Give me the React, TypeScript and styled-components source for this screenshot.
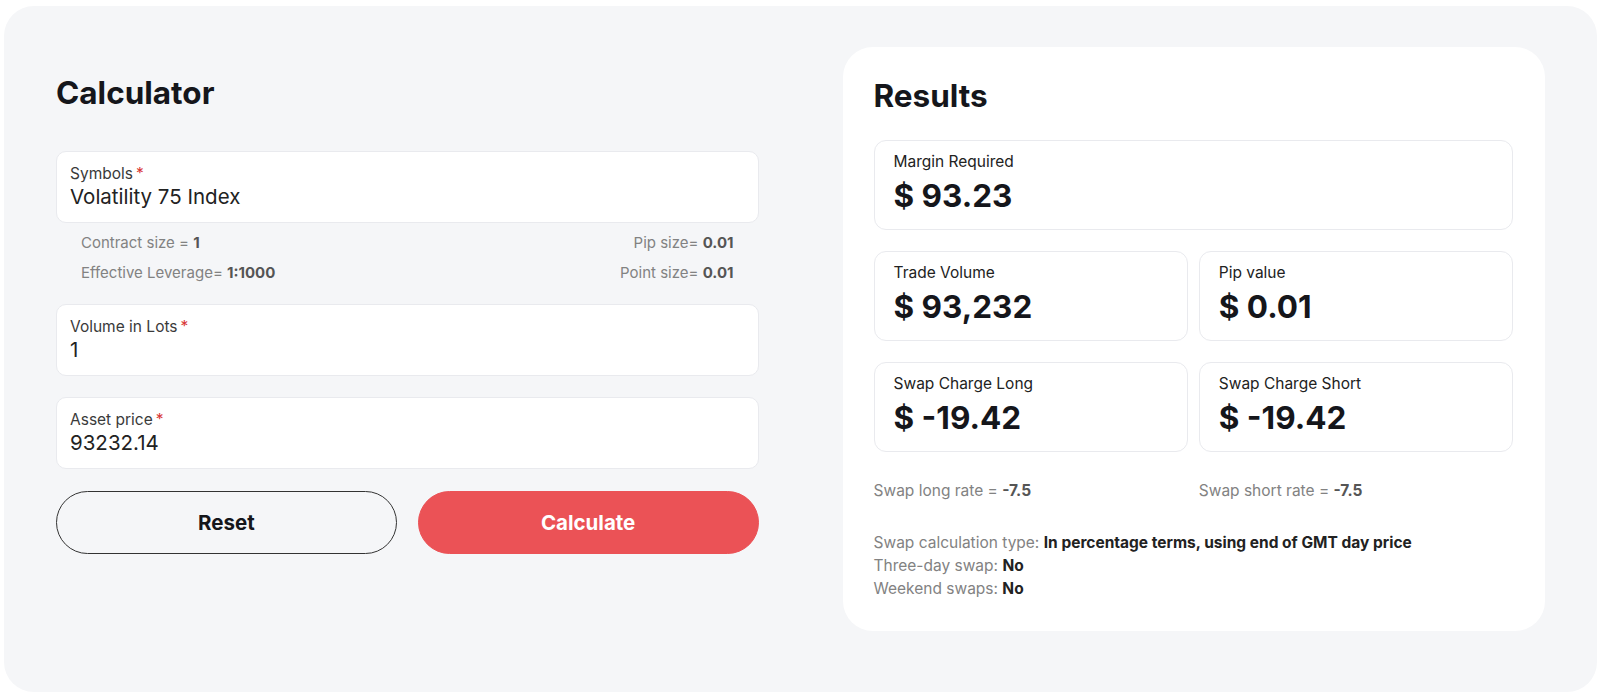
import React from "react";
import styled, { createGlobalStyle } from "styled-components";

const GlobalStyle = createGlobalStyle`
  html, body {
    margin: 0;
    padding: 0;
    background: #ffffff;
    font-family: Inter, "Noto Sans", "Liberation Sans", sans-serif;
  }
  * {
    box-sizing: border-box;
  }
`;

const Panel = styled.div`
  margin: 6px 3px 5px 4px;
  height: 686px;
  border-radius: 30px;
  background: #f5f6f8;
  padding: 41px 52px;
  display: grid;
  grid-template-columns: 1fr 1fr;
  column-gap: 84px;
  align-items: start;
`;

const Column = styled.div`
  display: flex;
  flex-direction: column;
  padding-top: 27px;
`;

const Heading = styled.h2`
  margin: 0;
  font-size: 31.5px;
  line-height: 38px;
  font-weight: 700;
  color: #15161b;
`;

const Field = styled.div<{ $gap?: number }>`
  margin-top: ${(p) => p.$gap ?? 21}px;
  background: #ffffff;
  border: 1px solid #e9eaee;
  border-radius: 10px;
  padding: 12px 13px 12px;
`;

const FieldLabel = styled.div`
  font-size: 15.5px;
  line-height: 20px;
  color: #3a3a3a;
`;

const Required = styled.span`
  color: #d93636;
  margin-left: 3px;
`;

const FieldValue = styled.div`
  font-size: 20.5px;
  line-height: 26px;
  color: #222222;
`;

const InfoRows = styled.div`
  padding: 5px 25px 0;
  display: grid;
  grid-template-columns: 1fr auto;
  margin-bottom: -5px;
`;

const Info = styled.div<{ $right?: boolean }>`
  font-size: 15px;
  line-height: 30px;
  color: #828282;
  text-align: ${(p) => (p.$right ? "right" : "left")};

  b {
    color: #555555;
    font-weight: 700;
  }
`;

const Buttons = styled.div`
  margin-top: 22px;
  display: grid;
  grid-template-columns: 1fr 1fr;
  column-gap: 21px;
`;

const Button = styled.button<{ $primary?: boolean }>`
  height: 63px;
  border-radius: 32px;
  font-family: inherit;
  font-size: 20.5px;
  font-weight: 700;
  cursor: pointer;
  border: ${(p) => (p.$primary ? "1px solid #eb5256" : "1px solid #333333")};
  background: ${(p) => (p.$primary ? "#eb5256" : "transparent")};
  color: ${(p) => (p.$primary ? "#ffffff" : "#15161b")};
`;

const ResultsCard = styled.div`
  background: #ffffff;
  border-radius: 30px;
  padding: 30px 32px 31px 31px;
  display: flex;
  flex-direction: column;
`;

const CardGrid = styled.div`
  margin-top: 25px;
  display: grid;
  grid-template-columns: 1fr 1fr;
  column-gap: 11px;
  row-gap: 21px;
`;

const ResultBox = styled.div<{ $wide?: boolean }>`
  grid-column: ${(p) => (p.$wide ? "1 / span 2" : "auto")};
  height: 90px;
  border: 1px solid #e9eaee;
  border-radius: 12px;
  padding: 11px 19px 0;
`;

const ResultLabel = styled.div`
  font-size: 15.5px;
  line-height: 20px;
  color: #222222;
`;

const ResultValue = styled.div`
  margin-top: 6px;
  font-size: 31.5px;
  line-height: 36px;
  font-weight: 700;
  color: #15161b;
`;

const RateRow = styled.div`
  margin-top: 27px;
  display: grid;
  grid-template-columns: 1fr 1fr;
  column-gap: 11px;
`;

const Note = styled.div`
  font-size: 15.5px;
  line-height: 23px;
  color: #828282;

  b {
    color: #555555;
  }
`;

const Details = styled.div`
  margin-top: 29px;
  display: flex;
  flex-direction: column;

  b {
    color: #222222;
    font-weight: 700;
  }
`;

const results = [
  { label: "Trade Volume", value: "$ 93,232" },
  { label: "Pip value", value: "$ 0.01" },
  { label: "Swap Charge Long", value: "$ -19.42" },
  { label: "Swap Charge Short", value: "$ -19.42" },
];

export default function App() {
  return (
    <>
      <GlobalStyle />
      <Panel>
        <Column>
          <Heading>Calculator</Heading>
          <Field $gap={39}>
            <FieldLabel>
              Symbols<Required>*</Required>
            </FieldLabel>
            <FieldValue>Volatility 75 Index</FieldValue>
          </Field>
          <InfoRows>
            <Info>
              Contract size = <b>1</b>
            </Info>
            <Info $right>
              Pip size= <b>0.01</b>
            </Info>
            <Info>
              Effective Leverage= <b>1:1000</b>
            </Info>
            <Info $right>
              Point size= <b>0.01</b>
            </Info>
          </InfoRows>
          <Field>
            <FieldLabel>
              Volume in Lots<Required>*</Required>
            </FieldLabel>
            <FieldValue>1</FieldValue>
          </Field>
          <Field>
            <FieldLabel>
              Asset price<Required>*</Required>
            </FieldLabel>
            <FieldValue>93232.14</FieldValue>
          </Field>
          <Buttons>
            <Button>Reset</Button>
            <Button $primary>Calculate</Button>
          </Buttons>
        </Column>

        <ResultsCard>
          <Heading>Results</Heading>
          <CardGrid>
            <ResultBox $wide>
              <ResultLabel>Margin Required</ResultLabel>
              <ResultValue>$ 93.23</ResultValue>
            </ResultBox>
            {results.map((r) => (
              <ResultBox key={r.label}>
                <ResultLabel>{r.label}</ResultLabel>
                <ResultValue>{r.value}</ResultValue>
              </ResultBox>
            ))}
          </CardGrid>
          <RateRow>
            <Note>
              Swap long rate = <b>-7.5</b>
            </Note>
            <Note>
              Swap short rate = <b>-7.5</b>
            </Note>
          </RateRow>
          <Details>
            <Note>
              Swap calculation type: <b>In percentage terms, using end of GMT day price</b>
            </Note>
            <Note>
              Three-day swap: <b>No</b>
            </Note>
            <Note>
              Weekend swaps: <b>No</b>
            </Note>
          </Details>
        </ResultsCard>
      </Panel>
    </>
  );
}
